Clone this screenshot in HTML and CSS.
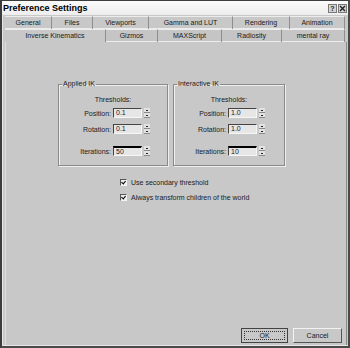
FILE: index.html
```html
<!DOCTYPE html>
<html lang="en">
<head>
    <meta charset="UTF-8">
    <title>Preference Settings</title>
    <link rel="stylesheet" href="styles.css">
</head>
<body>
    <div class="window">
        <div class="titlebar">
            <div class="title">Preference Settings</div>
            <div class="title-buttons">
                <span class="tbtn">?</span>
                <span class="tbtn">
                    <svg width="7" height="7" viewBox="0 0 7 7"><path d="M1 1L6 6M6 1L1 6" stroke="#222" stroke-width="1.4"/></svg>
                </span>
            </div>
        </div>

        <div class="tabs">
            <div class="tab-row back">
                <div class="tab" style="width:47px">General</div>
                <div class="tab" style="width:41px">Files</div>
                <div class="tab" style="width:56px">Viewports</div>
                <div class="tab" style="width:84px">Gamma and LUT</div>
                <div class="tab" style="width:57px">Rendering</div>
                <div class="tab" style="width:55px">Animation</div>
            </div>
            <div class="tab-row front">
                <div class="tab active" style="width:101px">Inverse Kinematics</div>
                <div class="tab" style="width:52px">Gizmos</div>
                <div class="tab" style="width:64px">MAXScript</div>
                <div class="tab" style="width:60px">Radiosity</div>
                <div class="tab" style="width:63px">mental ray</div>
            </div>
        </div>

        <div class="panel">
            <div class="groups">
                <fieldset class="group applied">
                    <legend>Applied IK</legend>
                    <div class="caption">Thresholds:</div>
                    <div class="field">
                        <label>Position:</label>
                        <span class="input">0.1</span>
                        <span class="spinner"></span>
                    </div>
                    <div class="field">
                        <label>Rotation:</label>
                        <span class="input">0.1</span>
                        <span class="spinner"></span>
                    </div>
                    <div class="field iter">
                        <label>Iterations:</label>
                        <span class="input heavy">50</span>
                        <span class="spinner"></span>
                    </div>
                </fieldset>
                <fieldset class="group interactive">
                    <legend>Interactive IK</legend>
                    <div class="caption">Thresholds:</div>
                    <div class="field">
                        <label>Position:</label>
                        <span class="input">1.0</span>
                        <span class="spinner"></span>
                    </div>
                    <div class="field">
                        <label>Rotation:</label>
                        <span class="input">1.0</span>
                        <span class="spinner"></span>
                    </div>
                    <div class="field iter">
                        <label>Iterations:</label>
                        <span class="input heavy">10</span>
                        <span class="spinner"></span>
                    </div>
                </fieldset>
            </div>

            <div class="checks">
                <div class="check"><span class="box"></span>Use secondary threshold</div>
                <div class="check"><span class="box"></span>Always transform children of the world</div>
            </div>

            <div class="actions">
                <button class="btn default"><span>OK</span></button>
                <button class="btn">Cancel</button>
            </div>
        </div>
    </div>
</body>
</html>
```

FILE: styles.css
```css
body {
    margin: 0;
    background-color: #c8c8c8;
    font-family: "Liberation Sans", Arial, sans-serif;
    font-size: 7px;
    color: #1a1a1a;
}
.window {
    width: 350px;
    height: 348px;
    box-sizing: border-box;
    border-top: 1px solid #3c3c3c;
    border-left: 2px solid #3c3c3c;
    border-right: 2px solid #4a4a4a;
    border-bottom: 2px solid #4a4a4a;
    box-shadow: inset 1px 0 0 #e6e6e6, inset 0 -1px 0 #e6e6e6;
    display: flex;
    flex-direction: column;
}
.titlebar {
    height: 14px;
    background: linear-gradient(#fbfbfb, #ededed);
    display: flex;
    align-items: center;
    padding-left: 1px;
}
.title {
    font-weight: bold;
    font-size: 9px;
    color: #000;
}
.title-buttons {
    margin-left: auto;
    display: flex;
    gap: 1px;
    margin-right: 1px;
}
.tbtn {
    width: 9px;
    height: 9px;
    box-sizing: border-box;
    border: 1px solid #7a7a7a;
    background: #d4d4d4;
    font-size: 7px;
    font-weight: bold;
    line-height: 7px;
    text-align: center;
    display: flex;
    align-items: center;
    justify-content: center;
}
.tabs {
    margin: 1px 1px 0 3px;
}
.tab-row {
    display: flex;
    height: 13px;
}
.tab {
    box-sizing: border-box;
    border-right: 1px solid #8e8e8e;
    border-top: 1px solid #ececec;
    text-align: center;
    line-height: 12px;
    white-space: nowrap;
}
.tab-row.back .tab {
    box-shadow: inset 0 -1px 0 #ececec;
}
.tab-row.front .tab {
    background-color: #c5c5c5;
    box-shadow: inset 0 -1px 0 #ececec;
}
.tab-row.front .tab.active {
    background-color: #c8c8c8;
    box-shadow: none;
}
.panel {
    flex: 1;
    margin: 0 1px 1px 3px;
    border-left: 1px solid #dedede;
    border-right: 1px solid #8a8a8a;
    display: flex;
    flex-direction: column;
}
.groups {
    display: flex;
    gap: 5px;
    margin: 38px 0 0 52px;
}
.group {
    margin: 0;
    padding: 0;
    height: 86px;
    box-sizing: border-box;
    border: 1px solid #8a8a8a;
    box-shadow: inset 1px 1px 0 #efefef, 1px 1px 0 #efefef;
}
.group.applied {
    width: 110px;
}
.group.interactive {
    width: 112px;
}
.group legend {
    margin-left: 3px;
    padding: 0 1px;
    line-height: 8px;
}
.caption {
    text-align: center;
    margin: 8px 0 5px;
}
.field {
    display: flex;
    align-items: center;
    height: 10px;
    margin-bottom: 6px;
}
.field.iter {
    margin-top: 12px;
}
.field label {
    width: 52px;
    text-align: right;
    padding-right: 2px;
}
.input {
    width: 29px;
    height: 10px;
    box-sizing: border-box;
    background-color: #e6e6e6;
    border-top: 1px solid #444;
    border-left: 1px solid #444;
    border-bottom: 1px solid #f6f6f6;
    border-right: 1px solid #f6f6f6;
    padding-left: 2px;
    line-height: 8px;
}
.input.heavy {
    border-top: 2px solid #000;
    line-height: 7px;
}
.spinner {
    width: 6px;
    height: 10px;
    margin-left: 2px;
    background:
        linear-gradient(#222, #222) 2px 2px / 2px 1px no-repeat,
        linear-gradient(#222, #222) 2px 7px / 2px 1px no-repeat,
        linear-gradient(#e2e2e2, #e2e2e2) 0 0 / 6px 4px no-repeat,
        linear-gradient(#e2e2e2, #e2e2e2) 0 5px / 6px 4px no-repeat,
        #8a8a8a;
}
.checks {
    margin: 13px 0 0 114px;
    display: flex;
    flex-direction: column;
    gap: 8px;
}
.check {
    display: flex;
    align-items: center;
    height: 7px;
}
.box {
    width: 7px;
    height: 7px;
    box-sizing: border-box;
    border-top: 1px solid #555;
    border-left: 1px solid #555;
    border-bottom: 1px solid #f4f4f4;
    border-right: 1px solid #f4f4f4;
    background-color: #ececec;
    margin-right: 4px;
    position: relative;
}
.box::after {
    content: "";
    position: absolute;
    left: 1px;
    top: 0;
    width: 2px;
    height: 3px;
    border-right: 1px solid #000;
    border-bottom: 1px solid #000;
    transform: rotate(40deg);
}
.actions {
    margin: auto 4px 2px 0;
    display: flex;
    justify-content: flex-end;
    gap: 5px;
}
.btn {
    height: 15px;
    width: 49px;
    padding: 0;
    font-family: "Liberation Sans", Arial, sans-serif;
    font-size: 7px;
    color: #1a1a1a;
    background-color: #c8c8c8;
    border-top: 1px solid #f2f2f2;
    border-left: 1px solid #f2f2f2;
    border-right: 1px solid #555;
    border-bottom: 1px solid #555;
}
.btn.default {
    width: 47px;
    outline: 1px solid #444;
    outline-offset: -1px;
    padding: 2px;
}
.btn.default span {
    display: block;
    height: 100%;
    box-sizing: border-box;
    border: 1px dotted #333;
    line-height: 7px;
}
```
